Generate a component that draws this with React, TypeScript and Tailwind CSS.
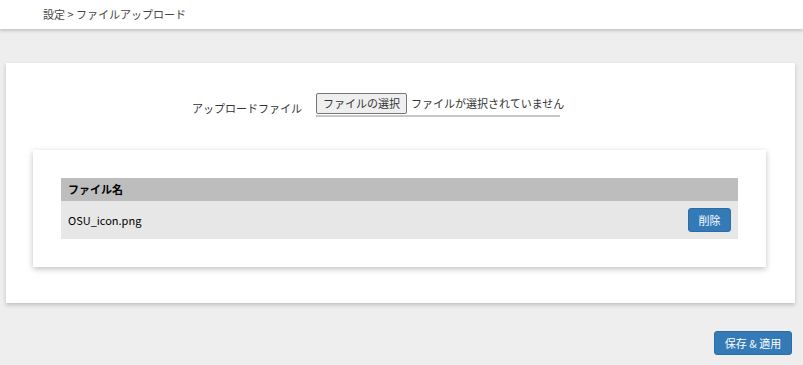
export default function App() {
  return (
    <div
      className="min-h-screen bg-[#eeeeee] text-[#333333]"
      style={{ fontFamily: '"Noto Sans CJK JP", "Noto Sans", sans-serif' }}
    >
      {/* breadcrumb bar */}
      <div className="h-[29px] bg-white shadow-[0_2px_3px_rgba(0,0,0,0.18)] flex items-center pl-[43px] text-[11px] text-[#444]">
        設定 &gt; ファイルアップロード
      </div>

      <div className="pt-[34px] pl-[6px] pr-[8px]">
        <div className="bg-white shadow-[0_2px_4px_rgba(0,0,0,0.2)] pt-[31px] pb-[36px] pl-[27px] pr-[29px]">
          {/* upload row */}
          <div className="flex items-center pl-[159px] h-[22px]">
            <span className="text-[11px] mr-[14px] mt-[6px] whitespace-nowrap">アップロードファイル</span>
            <div className="flex items-center border-b-2 border-[#c8c8c8] w-[244px] h-[23px] pb-[1px]">
              <button className="h-[21px] px-[6px] text-[11px] bg-[#efefef] border border-[#767676] rounded-[2px] leading-none whitespace-nowrap">
                ファイルの選択
              </button>
              <span className="text-[11px] ml-[4px] whitespace-nowrap">ファイルが選択されていません</span>
            </div>
          </div>

          {/* file list */}
          <div className="mt-[34px] bg-white shadow-[0_2px_6px_rgba(0,0,0,0.25)] p-[28px]">
            <div className="bg-[#bdbdbd] h-[23px] flex items-center px-[7px] text-[11px] font-bold text-black">
              ファイル名
            </div>
            <div className="bg-[#e7e7e7] h-[38px] flex items-center justify-between pl-[7px] pr-[7px] text-[11px] text-black">
              <span>OSU_icon.png</span>
              <button className="h-[24px] w-[43px] bg-[#337ab7] border border-[#2e6da4] rounded-[3px] text-white text-[11px]">
                削除
              </button>
            </div>
          </div>
        </div>

        <div className="flex justify-end mt-[28px] pr-[3px]">
          <button className="h-[24px] w-[78px] bg-[#337ab7] border border-[#2e6da4] rounded-[3px] text-white text-[11px]">
            保存 &amp; 適用
          </button>
        </div>
      </div>
    </div>
  );
}
